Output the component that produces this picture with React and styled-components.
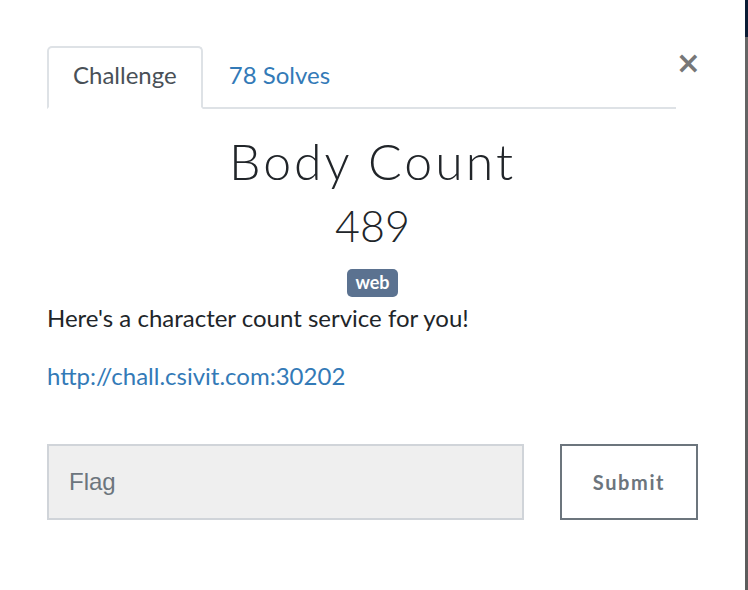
import React from 'react';
import styled, { createGlobalStyle } from 'styled-components';

const GlobalStyle = createGlobalStyle`
	html, body {
		margin: 0;
		padding: 0;
		background: #ffffff;
	}
	body {
		font-family: Lato, "Open Sans", sans-serif;
		color: #212529;
	}
`;

const App = () => {
	return (
		<>
			<GlobalStyle />
			<Page>
				<Modal>
					<Header>
						<Tabs>
							<Tab active>Challenge</Tab>
							<Tab>78 Solves</Tab>
						</Tabs>
						<Close aria-label="Close">×</Close>
					</Header>
					<Title>Body Count</Title>
					<Points>489</Points>
					<Tags>
						<Badge>web</Badge>
					</Tags>
					<Description>Here's a character count service for you!</Description>
					<Link href="#">http://chall.csivit.com:30202</Link>
					<Form>
						<FlagInput placeholder="Flag" />
						<SubmitButton>Submit</SubmitButton>
					</Form>
				</Modal>
				<Backdrop />
			</Page>
		</>
	);
};

export default App;

/* Styles --- */

const Page = styled.div`
	display: grid;
	grid-template-columns: 745px 3px;
	width: 748px;
	height: 590px;
	overflow: hidden;
`;

const Backdrop = styled.div`
	background: linear-gradient(to bottom, #0b1b34 0, #0b1b34 37px, #656565 37px, #5c5c5c 100%);
`;

const Modal = styled.div`
	display: flex;
	flex-direction: column;
	padding: 46px 47px 0 47px;
	background: #ffffff;
`;

const Header = styled.div`
	display: flex;
	align-items: flex-start;
`;

const Tabs = styled.div`
	display: flex;
	width: 630px;
	border-bottom: 2px solid #dee2e6;
`;

const Tab = styled.div`
	display: flex;
	align-items: center;
	height: 52px;
	padding: 0 24px 7px;
	margin-bottom: -2px;
	font-size: 24px;
	border: 2px solid transparent;
	border-radius: 5px 5px 0 0;
	color: ${(p) => (p.active ? '#495057' : '#337ab7')};
	background: ${(p) => (p.active ? '#ffffff' : 'transparent')};
	border-color: ${(p) => (p.active ? '#dee2e6 #dee2e6 #ffffff' : 'transparent')};
`;

const Close = styled.button`
	margin-left: auto;
	margin-right: -3px;
	padding: 0;
	border: none;
	background: none;
	font-family: "DejaVu Sans", sans-serif;
	font-size: 30px;
	line-height: 34px;
	color: #777777;
	font-weight: bold;
`;

const Title = styled.h1`
	margin: 21px 0 0;
	text-align: center;
	font-size: 50px;
	font-weight: 300;
	line-height: 62px;
	letter-spacing: 3px;
	color: #212529;
`;

const Points = styled.h2`
	margin: 4px 0 0;
	text-align: center;
	font-size: 43px;
	font-weight: 300;
	line-height: 60px;
	color: #212529;
`;

const Tags = styled.div`
	display: flex;
	justify-content: center;
	margin-top: 13px;
`;

const Badge = styled.span`
	display: inline-block;
	padding: 3px 8px 4px;
	border-radius: 5px;
	background: #5b7290;
	color: #ffffff;
	font-size: 18px;
	font-weight: 700;
	line-height: 21px;
`;

const Description = styled.p`
	margin: 3px 0 0;
	font-size: 24px;
	line-height: 36px;
	color: #212529;
`;

const Link = styled.a`
	margin-top: 22px;
	font-size: 24px;
	line-height: 36px;
	color: #337ab7;
	text-decoration: none;
`;

const Form = styled.div`
	display: flex;
	justify-content: space-between;
	margin-top: 50px;
`;

const FlagInput = styled.input`
	box-sizing: border-box;
	width: 477px;
	height: 76px;
	padding: 0 20px;
	border: 2px solid #d0d4d9;
	background: #efefef;
	font-family: "Liberation Sans", Arial, sans-serif;
	font-size: 24px;
	color: #495057;
	outline: none;

	&::placeholder {
		color: #6c757d;
	}
`;

const SubmitButton = styled.button`
	box-sizing: border-box;
	width: 138px;
	height: 76px;
	border: 2px solid #6c757d;
	background: #ffffff;
	font-family: Lato, sans-serif;
	font-size: 20px;
	font-weight: 700;
	letter-spacing: 1.6px;
	color: #6c757d;
`;
